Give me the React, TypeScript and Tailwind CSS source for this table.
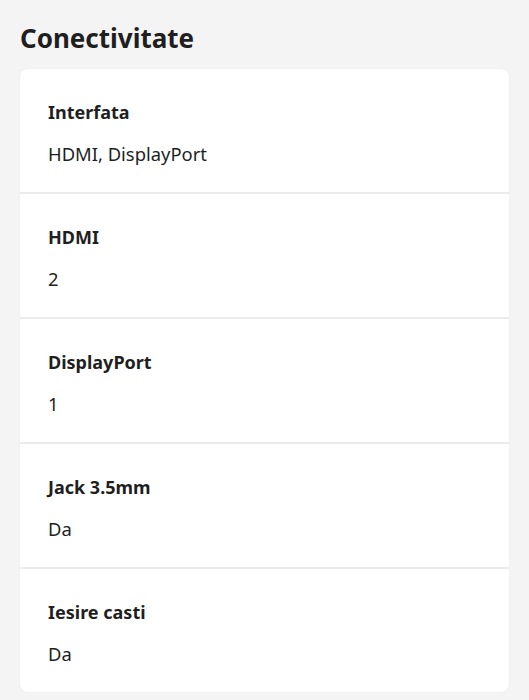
const specs = [
  { label: "Interfata", value: "HDMI, DisplayPort" },
  { label: "HDMI", value: "2" },
  { label: "DisplayPort", value: "1" },
  { label: "Jack 3.5mm", value: "Da" },
  { label: "Iesire casti", value: "Da" },
]

export default function App() {
  return (
    <div
      className="min-h-[700px] bg-[#f4f4f4] px-5 pt-[20px] pb-2 text-[#1f1f1f]"
      style={{ fontFamily: '"Noto Sans", "Open Sans", sans-serif' }}
    >
      <h1 className="text-[26px] font-bold leading-[36px] mb-[13px]">Conectivitate</h1>

      <div className="bg-white rounded-[8px] shadow-[0_0_2px_rgba(0,0,0,0.06)] overflow-hidden">
        {specs.map((spec, i) => (
          <div
            key={spec.label}
            className={
              "pl-7 pr-7 pt-[30px] pb-[25px] " +
              (i < specs.length - 1 ? "border-b-2 border-[#ebebeb]" : "")
            }
          >
            <div className="text-[18px] font-bold leading-[27px]">{spec.label}</div>
            <div className="text-[18.4px] leading-[27px] mt-[14px]">{spec.value}</div>
          </div>
        ))}
      </div>
    </div>
  )
}
